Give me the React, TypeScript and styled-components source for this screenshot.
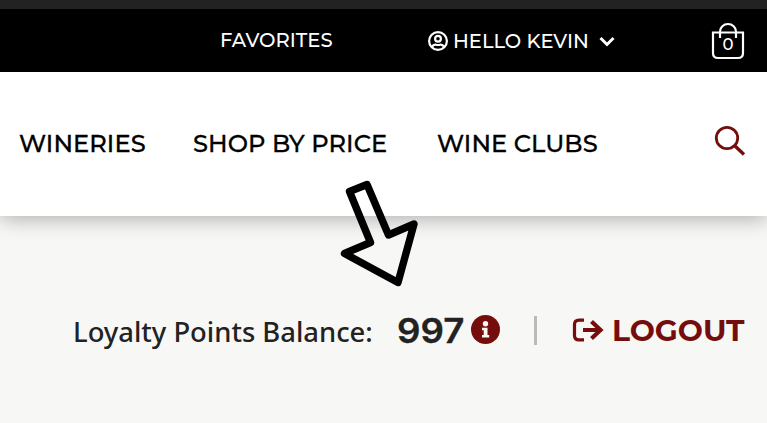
import React from "react";
import styled, { createGlobalStyle } from "styled-components";

const GlobalStyle = createGlobalStyle`
  *, *::before, *::after { box-sizing: border-box; }
  body { margin: 0; background: #f7f7f5; font-family: "Montserrat", "Lato", sans-serif; }
`;

const maroon = "#760d0d";

const Page = styled.div`
  position: relative;
  width: 767px;
  height: 423px;
  overflow: hidden;
  background: #f7f7f5;
`;

const TopBar = styled.header`
  height: 72px;
  border-top: 9px solid #222;
  background: #000;
  color: #fff;
  display: flex;
  align-items: center;
  padding-left: 220px;
`;

const MainNav = styled.nav`
  position: relative;
  height: 144px;
  background: #fff;
  color: #000;
  display: flex;
  align-items: center;
  padding-left: 19px;
  box-shadow: 0 2px 20px rgba(0, 0, 0, 0.32);
`;

const AccountBar = styled.section`
  display: flex;
  align-items: center;
  height: 60px;
  margin-top: 84px;
  padding-left: 73px;
`;

const Link = styled.a<{ $width: number; $size: number; $weight?: number; $lift?: number }>`
  flex: none;
  width: ${(p) => p.$width}px;
  padding-bottom: ${(p) => p.$lift ?? 0}px;
  font-size: ${(p) => p.$size}px;
  font-weight: ${(p) => p.$weight ?? 500};
  line-height: 30px;
  white-space: nowrap;
  color: inherit;
  text-decoration: none;
`;

const NavLink = styled(Link)`
  letter-spacing: 0.08px;
  -webkit-text-stroke: 0.3px currentColor;
`;

const Glyph = styled.svg<{ $gap?: number }>`
  flex: none;
  display: block;
  margin-right: ${(p) => p.$gap ?? 0}px;
`;

const SearchButton = styled.button`
  margin: 0 0 6px;
  padding: 0;
  border: 0;
  background: none;
`;

const Bag = styled.button`
  position: relative;
  width: 34px;
  height: 38px;
  margin: 0 0 0 96px;
  padding: 0;
  border: 0;
  background: none;
  color: #fff;
`;

const BagCount = styled.span`
  position: absolute;
  inset: 12px 0 auto 0;
  font: 500 16.5px/20px "Montserrat", "Lato", sans-serif;
  text-align: center;
`;

const BalanceLabel = styled.span`
  flex: none;
  width: 324px;
  padding-top: 4px;
  color: #222;
  font: 500 27.4px/36px "Noto Sans", sans-serif;
  white-space: nowrap;
`;

const Points = styled.strong`
  flex: none;
  width: 74px;
  padding-top: 1px;
  color: #222;
  font: 600 34px/36px "Inter", sans-serif;
  -webkit-text-stroke: 0.3px currentColor;
  transform: scaleX(1.08);
  transform-origin: left center;
`;

const Divider = styled.span`
  width: 3px;
  height: 29px;
  margin: 0 35px 0 34px;
  background: #bababa;
`;

const Logout = styled.a`
  display: flex;
  align-items: center;
  color: ${maroon};
`;

const Pointer = styled.svg`
  position: absolute;
  left: 330px;
  top: 170px;
`;

export default function App() {
  return (
    <>
      <GlobalStyle />
      <Page>
        <TopBar>
          <Link $width={208} $size={19.6} $lift={2}>FAVORITES</Link>
          <Glyph $gap={5} width="20" height="20" viewBox="0 0 20 20" fill="none" stroke="#fff" strokeWidth="2.2">
            <circle cx="10" cy="10" r="8.9" />
            <circle cx="10" cy="7.7" r="2.9" />
            <path d="M3.8 16c1.2-2 2.4-2.5 4-2.3 1.5.4 2.9.4 4.4 0 1.6-.2 2.8.3 4 2.3" />
          </Glyph>
          <Link $width={146} $size={19.5}>HELLO KEVIN</Link>
          <Glyph width="16" height="12" viewBox="0 0 16 12" fill="none" stroke="#fff" strokeWidth="3">
            <path d="M1.5 3L8 9.5L14.5 3" />
          </Glyph>
          <Bag aria-label="Cart">
            <Glyph width="34" height="38" viewBox="0 0 34 38" fill="none" stroke="#fff" strokeWidth="2.2">
              <path d="M2 10.5H32V31Q32 36 27 36H7Q2 36 2 31Z" />
              <path d="M9 16V9.5a8 7.5 0 0 1 16 0V16" />
            </Glyph>
            <BagCount>0</BagCount>
          </Bag>
        </TopBar>
        <MainNav>
          <NavLink $width={174} $size={24.1} $lift={1}>WINERIES</NavLink>
          <NavLink $width={244} $size={24.1} $lift={1}>SHOP BY PRICE</NavLink>
          <NavLink $width={277} $size={24.1} $lift={1}>WINE CLUBS</NavLink>
          <SearchButton aria-label="Search">
            <Glyph width="32" height="32" viewBox="0 0 32 32" fill="none" stroke={maroon}>
              <circle cx="13" cy="13" r="10.7" strokeWidth="2.8" />
              <path d="M21 21L30 29.5" strokeWidth="3.4" />
            </Glyph>
          </SearchButton>
        </MainNav>
        <AccountBar>
          <BalanceLabel>Loyalty Points Balance:</BalanceLabel>
          <Points>997</Points>
          <Glyph width="29" height="31" viewBox="0 0 29 31">
            <circle cx="14.5" cy="14.5" r="14.5" fill={maroon} />
            <circle cx="14.5" cy="8.8" r="2.7" fill="#f7f7f5" />
            <path d="M11 12.8h5.5v7.2h1.7v2.5H11V20h1.7v-4.7H11z" fill="#f7f7f5" />
          </Glyph>
          <Divider />
          <Logout>
            <Glyph $gap={8} width="32" height="24" viewBox="0 0 32 24" fill="none" stroke={maroon} strokeWidth="3.2">
              <path d="M12 2.1H7Q2.5 2.1 2.5 6.5V17.5Q2.5 21.9 7 21.9H12" />
              <path d="M11 12H28M19.5 3.5L28.5 12L19.5 20.5" strokeWidth="4.2" />
            </Glyph>
            <Link $width={136} $size={29.8} $weight={700}>LOGOUT</Link>
          </Logout>
        </AccountBar>
        <Pointer width="100" height="125" viewBox="330 170 100 125" fill="none" stroke="#000" strokeWidth="7.4" strokeLinejoin="round">
          <path d="M349.5 191.5L367 184.5L388.5 235L414 224L398 282.5L344.5 253.5L370.5 242.5Z" />
        </Pointer>
      </Page>
    </>
  );
}
